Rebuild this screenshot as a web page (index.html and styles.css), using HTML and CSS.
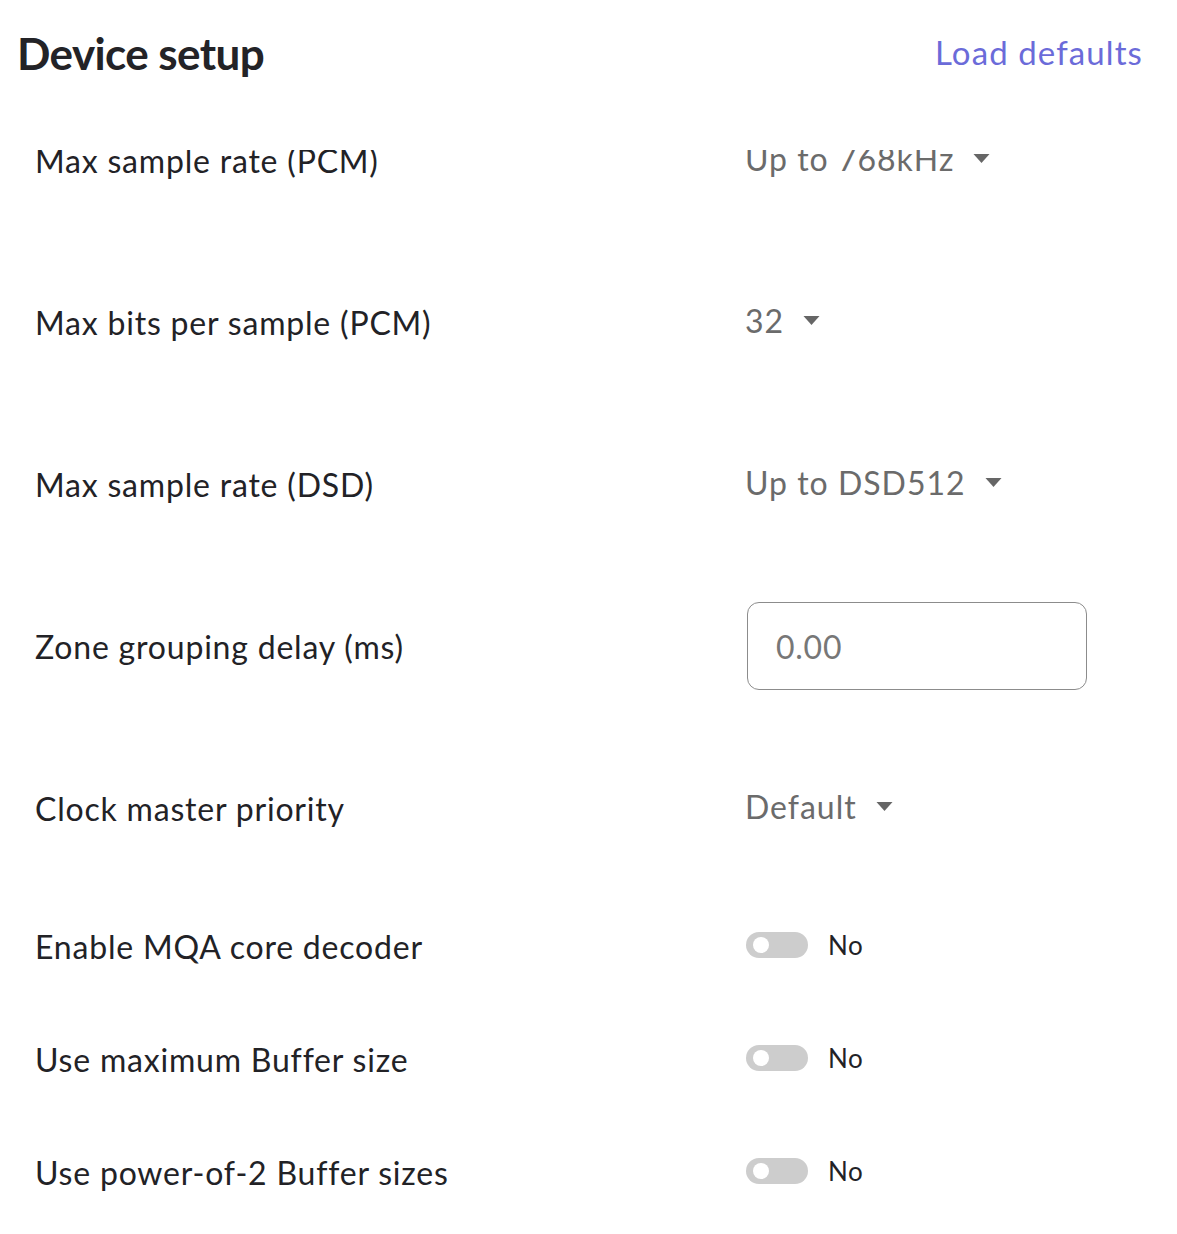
FILE: index.html
```html
<!DOCTYPE html>
<html lang="en">

<head>
  <meta charset="UTF-8">
  <meta name="viewport" content="width=device-width, initial-scale=1.0">
  <title>Device setup</title>
  <link rel="stylesheet" href="styles.css">
</head>

<body>
  <header class="top">
    <h1>Device setup</h1>
    <a class="defaults" href="#">Load defaults</a>
  </header>
  <main class="scroller">
    <ul class="settings">
      <li class="row">
        <span class="label">Max sample rate (PCM)</span>
        <div class="select"><span>Up to 768kHz</span><svg class="caret" viewBox="0 0 16 9"><polygon points="0,0 16,0 8,9" /></svg></div>
      </li>
      <li class="row">
        <span class="label">Max bits per sample (PCM)</span>
        <div class="select"><span>32</span><svg class="caret" viewBox="0 0 16 9"><polygon points="0,0 16,0 8,9" /></svg></div>
      </li>
      <li class="row">
        <span class="label">Max sample rate (DSD)</span>
        <div class="select"><span>Up to DSD512</span><svg class="caret" viewBox="0 0 16 9"><polygon points="0,0 16,0 8,9" /></svg></div>
      </li>
      <li class="row">
        <span class="label">Zone grouping delay (ms)</span>
        <div class="field"><input class="num" type="text" value="0.00"></div>
      </li>
      <li class="row">
        <span class="label">Clock master priority</span>
        <div class="select"><span>Default</span><svg class="caret" viewBox="0 0 16 9"><polygon points="0,0 16,0 8,9" /></svg></div>
      </li>
      <li class="row short">
        <span class="label">Enable MQA core decoder</span>
        <div class="switch"><span class="track"><span class="knob"></span></span><span>No</span></div>
      </li>
      <li class="row short">
        <span class="label">Use maximum Buffer size</span>
        <div class="switch"><span class="track"><span class="knob"></span></span><span>No</span></div>
      </li>
      <li class="row short">
        <span class="label">Use power-of-2 Buffer sizes</span>
        <div class="switch"><span class="track"><span class="knob"></span></span><span>No</span></div>
      </li>
    </ul>
  </main>
</body>

</html>
```

FILE: styles.css
```css
* {
  margin: 0;
  padding: 0;
  box-sizing: border-box;

  font-family: Lato, "Open Sans", sans-serif;
}

body {
  background: #fff;
  color: #222226;
  height: 1234px;
  overflow: hidden;
}

.top {
  display: flex;
  justify-content: space-between;
  align-items: flex-start;

  height: 150px;
  padding: 27px 34px 0 17px;
}

.top h1 {
  font-size: 44px;
  font-weight: 700;
  line-height: 1.2;
  letter-spacing: -0.6px;
  color: #232327;
}

.defaults {
  margin-top: 6px;
  font-size: 33px;
  line-height: 1.2;
  letter-spacing: 1.1px;
  color: #6b6bd9;
  text-decoration: none;
}

/* list scrolled a little, first row slides under the header */
.scroller {
  height: 1084px;
  overflow: hidden;
}

.settings {
  list-style: none;
  margin-top: -70px;
}

.row {
  display: grid;
  grid-template-columns: 710px 1fr;
  align-items: center;

  height: 162px;
  padding: 0 35px;
}

.row.short {
  height: 113px;
}

.label {
  font-size: 32px;
  line-height: 40px;
  letter-spacing: 0.8px;
  color: #222226;
}

.select {
  display: flex;
  align-items: center;
  margin-bottom: 5px;

  font-size: 32px;
  line-height: 40px;
  letter-spacing: 1px;
  color: #6b6b6b;
}

.caret {
  width: 17px;
  height: 9px;
  margin-left: 19px;
  fill: #666;
}

.field {
  margin-bottom: 2px;
}

.num {
  width: 340px;
  height: 88px;
  padding: 0 28px;
  margin-left: 2px;

  border: 1.5px solid #8c8c8c;
  border-radius: 12px;
  outline: none;

  font-family: Lato, sans-serif;
  font-size: 32px;
  letter-spacing: 0.75px;
  color: #777;
}

.switch {
  display: flex;
  align-items: center;
  gap: 20px;
  margin-left: 1px;
  margin-bottom: 3px;

  font-size: 26px;
  letter-spacing: 0.5px;
  color: #222226;
}

.track {
  display: flex;
  align-items: center;

  width: 62px;
  height: 26px;
  padding-left: 7px;
  border-radius: 13px;
  background: #cdcdcd;
}

.knob {
  width: 16px;
  height: 16px;
  border-radius: 50%;
  background: #fff;
}
```
